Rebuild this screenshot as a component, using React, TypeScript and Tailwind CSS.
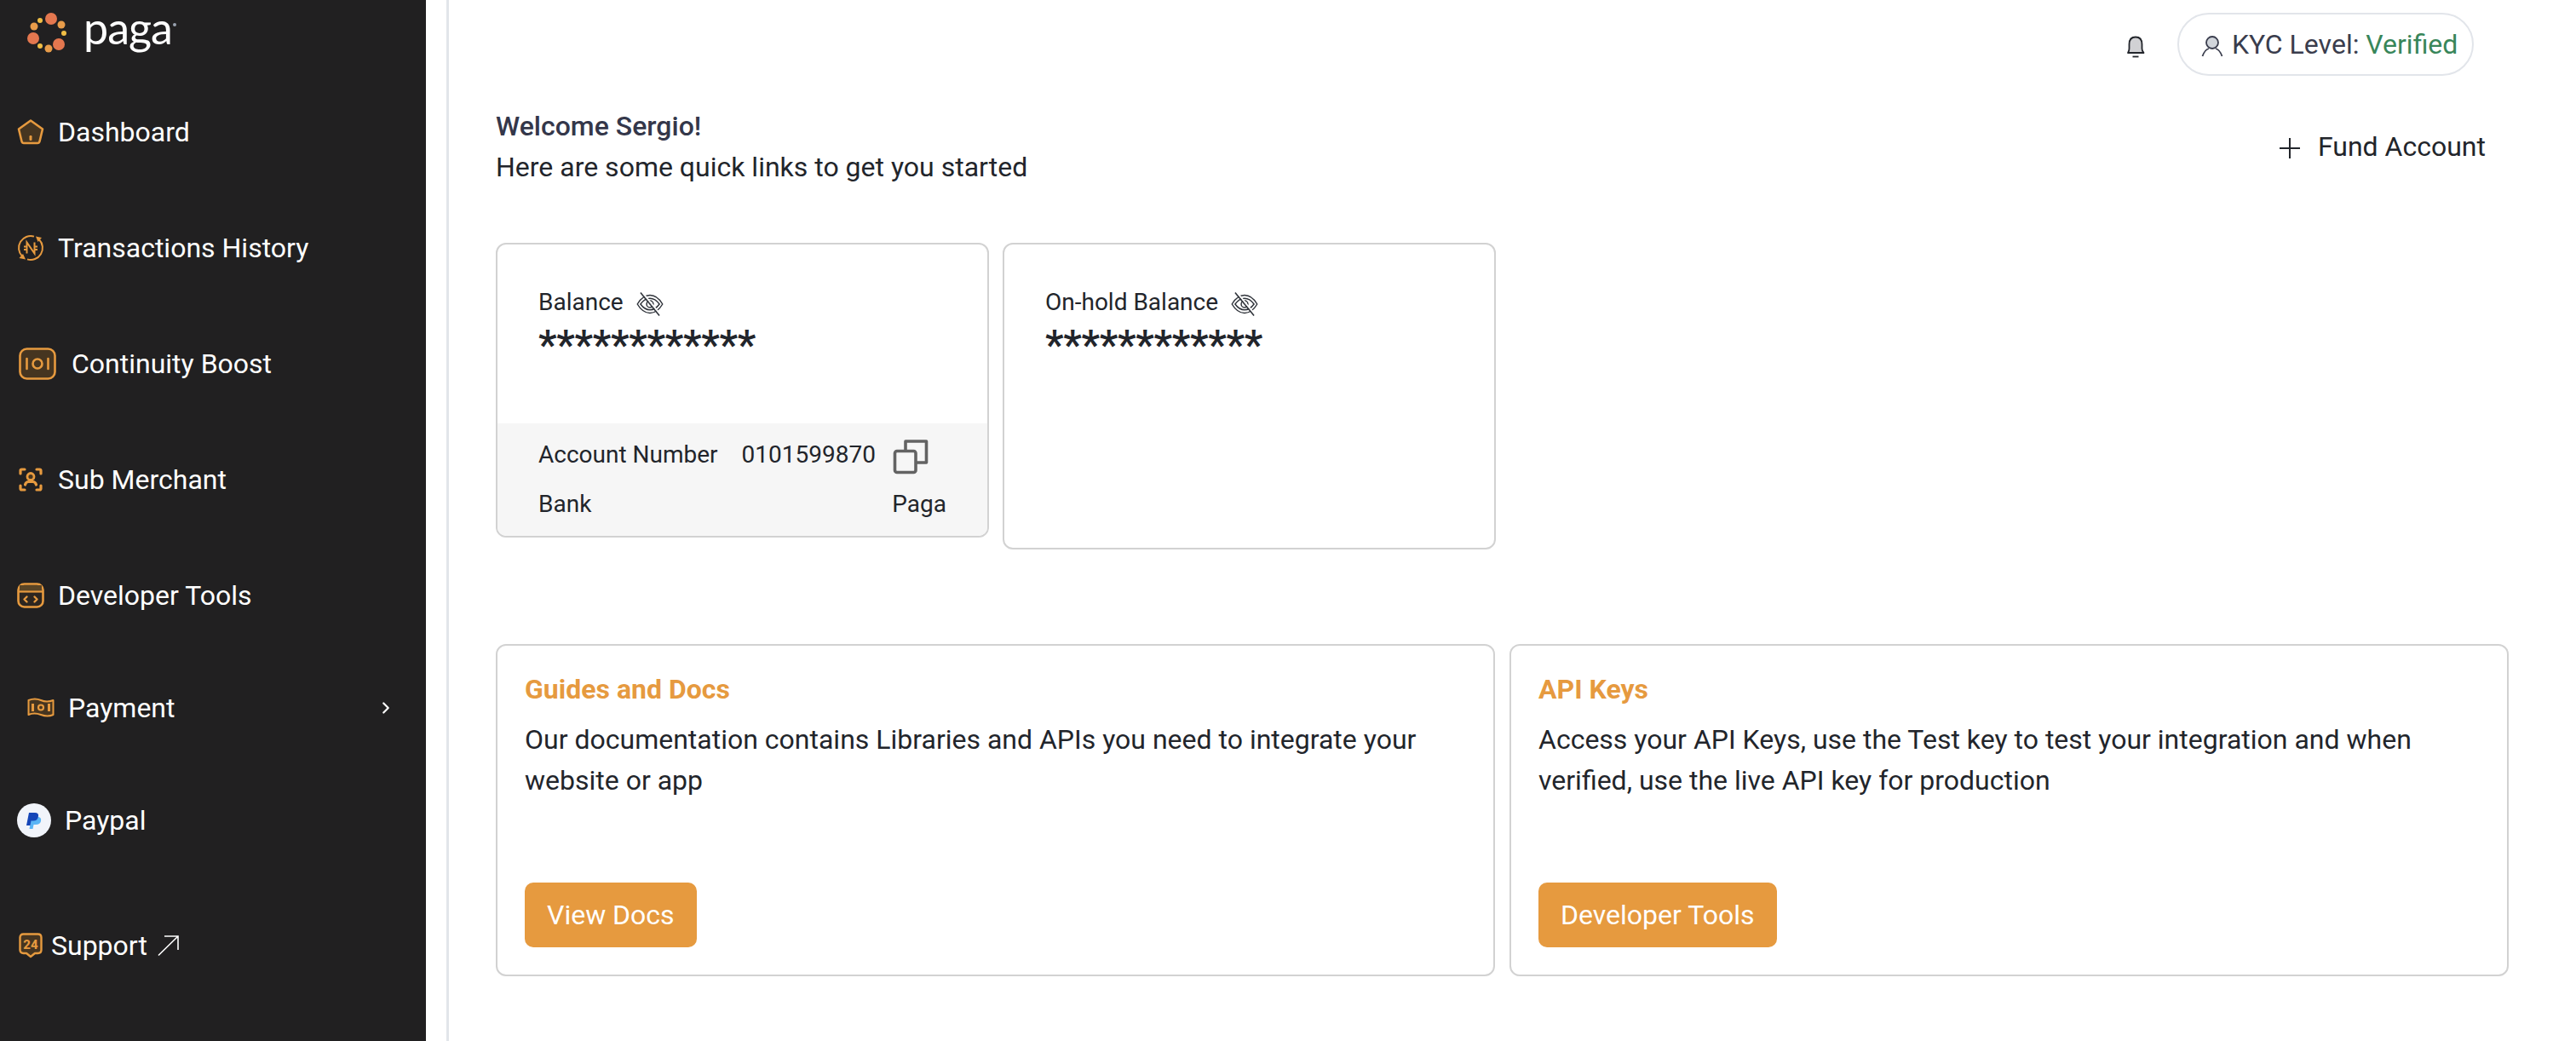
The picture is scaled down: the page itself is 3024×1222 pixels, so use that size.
import { ChevronRight } from 'lucide-react';

const iconColor = '#E69A3F';

function PagaLogo() {
  const dots: [number, number, number, string][] = [
    [60, 22, 7, '#E4774F'],
    [72, 29, 4.5, '#E89C4A'],
    [75, 39, 3, '#F0BE45'],
    [69, 52, 7, '#E4774F'],
    [57, 57, 4.5, '#E89C4A'],
    [47, 54, 3, '#F0BE45'],
    [39, 45, 7, '#E4774F'],
    [40, 31, 4.5, '#E89C4A'],
    [47, 24, 3, '#F0BE45'],
  ];
  return (
    <div className="flex items-center h-[66px]">
      <svg width="84" height="66" viewBox="0 0 84 66" className="shrink-0">
        {dots.map(([cx, cy, r, fill], i) => (
          <circle key={i} cx={cx} cy={cy} r={r} fill={fill} />
        ))}
      </svg>
      <span className="ml-[14px] -mt-[2px] text-[52px] leading-none text-white font-['Lato',sans-serif] font-normal tracking-[-1px]">paga</span>
      <span className="self-start mt-[27px] ml-[1px] w-[4px] h-[4px] rounded-full bg-gray-400"></span>
    </div>
  );
}

function HomeIcon() {
  return (
    <svg width="32" height="32" viewBox="0 0 32 32" fill="none">
      <path d="M16 2.5 L30 12.5 L26.5 27 Q26 29 24 29 H8 Q6 29 5.5 27 L2 12.5 Z" fill="#463520" stroke={iconColor} strokeWidth="2.6" strokeLinejoin="round" />
      <rect x="14.5" y="20" width="3" height="6" rx="1.2" fill={iconColor} />
    </svg>
  );
}

function NairaCycleIcon() {
  return (
    <svg width="32" height="32" viewBox="0 0 32 32" fill="none" stroke={iconColor} strokeWidth="2">
      <path d="M20 2.6 A14 14 0 0 0 6 25.8" />
      <path d="M12 29.4 A14 14 0 0 0 26 6.2" />
      <path d="M22 2.5 L29 4 L24.5 9 Z" fill={iconColor} stroke="none" />
      <path d="M10 29.5 L2.5 28 L7 23 Z" fill={iconColor} stroke="none" />
      <path d="M11.5 22.5 V9.5 L20.5 22.5 V9.5" strokeWidth="2" />
      <path d="M8 14.5 H11 M8 18 H11 M21 14.5 H24 M21 18 H24" strokeWidth="1.8" />
    </svg>
  );
}

function BoostIcon() {
  return (
    <svg width="44" height="38" viewBox="0 0 44 38" fill="none">
      <rect x="1.5" y="1.5" width="41" height="35" rx="8" fill="#463520" stroke={iconColor} strokeWidth="2.6" />
      <circle cx="22" cy="19" r="5.5" stroke={iconColor} strokeWidth="2.6" />
      <path d="M9.5 13 V25 M34.5 13 V25" stroke={iconColor} strokeWidth="2.6" strokeLinecap="round" />
    </svg>
  );
}

function ScanUserIcon() {
  return (
    <svg width="28" height="28" viewBox="0 0 28 28" fill="none" stroke={iconColor} strokeWidth="3.2" strokeLinecap="round">
      <path d="M2 7 V3.5 Q2 2 3.5 2 H7 M21 2 H24.5 Q26 2 26 3.5 V7 M26 21 V24.5 Q26 26 24.5 26 H21 M7 26 H3.5 Q2 26 2 24.5 V21" />
      <circle cx="14" cy="10.5" r="4" fill="#463520" strokeWidth="2.8" />
      <path d="M7.5 20 Q8.5 16.5 11.5 16.5 H16.5 Q19.5 16.5 20.5 20" />
    </svg>
  );
}

function DevIcon() {
  return (
    <svg width="32" height="30" viewBox="0 0 32 30" fill="none" stroke={iconColor}>
      <rect x="1.5" y="1.5" width="29" height="27" rx="7" fill="#463520" fillOpacity="0.35" strokeWidth="2.6" />
      <path d="M3 3 H29 V10 H3 Z" fill="#5a4526" stroke="none" />
      <path d="M2 10.5 H30" strokeWidth="2.2" />
      <path d="M11.5 16.5 L8.5 19.5 L11.5 22.5 M20.5 16.5 L23.5 19.5 L20.5 22.5" strokeWidth="2.4" strokeLinecap="round" strokeLinejoin="round" />
    </svg>
  );
}

function MoneyIcon() {
  return (
    <svg width="32" height="24" viewBox="0 0 32 24" fill="none" stroke={iconColor}>
      <path d="M1.5 3 Q9 0 16 3 T30.5 3 V20 Q24 23 16 20 T1.5 20 Z" fill="#463520" strokeWidth="2" strokeLinejoin="round" />
      <circle cx="16" cy="11.5" r="3" strokeWidth="2.2" />
      <path d="M6.5 7 V16 M25.5 7 V16" strokeWidth="3" />
    </svg>
  );
}

function PaypalIcon() {
  return (
    <div className="w-10 h-10 rounded-full bg-[#F1F4FA] flex items-center justify-center">
      <svg width="18" height="21" viewBox="0 0 18 21">
        <path d="M6 6 H13 Q18 6 17 11 Q16 15 11 15 H8.5 L7.5 20 H3.5 Z" fill="#5BB5F5" />
        <path d="M3 1 H10 Q14.5 1 14 5 Q13.5 10.5 8 10.5 H5.5 L4.5 16 H0 Z" fill="#1546B8" />
      </svg>
    </div>
  );
}

function SupportIcon() {
  return (
    <svg width="28" height="30" viewBox="0 0 28 30" fill="none">
      <path d="M5.5 1.5 H22.5 Q26.5 1.5 26.5 5.5 V20 Q26.5 24 22.5 24 H19 L14 28 L9 24 H5.5 Q1.5 24 1.5 20 V5.5 Q1.5 1.5 5.5 1.5 Z" fill="#463520" stroke={iconColor} strokeWidth="2.4" strokeLinejoin="round" />
      <text x="14" y="18.5" textAnchor="middle" fontSize="15" fontWeight="800" fill={iconColor} fontFamily="'Roboto',sans-serif">24</text>
    </svg>
  );
}

function EyeOff() {
  return (
    <svg width="32" height="30" viewBox="0 0 26 24" fill="none" stroke="#30343B" strokeWidth="1.2" className="shrink-0 mt-[4px]">
      <path d="M1 12 Q6 3.5 13 3.5 Q20 3.5 25 12 Q20 20.5 13 20.5 Q6 20.5 1 12 Z" />
      <path d="M4 12 Q8 6.5 13 6.5 Q18 6.5 22 12 Q18 17.5 13 17.5 Q8 17.5 4 12 Z" />
      <circle cx="13" cy="12" r="3.2" />
      <path d="M5 0 L23 22" strokeWidth="1.6" stroke="#fff" />
      <path d="M4 1 L22 23" strokeWidth="1.3" />
    </svg>
  );
}

function CopyIcon() {
  return (
    <svg width="42" height="42" viewBox="0 0 42 42" fill="none" stroke="#636363" strokeWidth="3.6" strokeLinejoin="round">
      <path d="M15 14 V3 H39.5 V28 H27" />
      <rect x="2.5" y="14.5" width="24.5" height="25" rx="2.5" />
    </svg>
  );
}

type NavItem = {
  label: string;
  icon: React.ReactNode;
  box: string;
  row: string;
  gap: string;
  chevron?: boolean;
  arrow?: boolean;
};

const navItems: NavItem[] = [
  { label: 'Dashboard', icon: <HomeIcon />, box: 'pl-[20px]', row: 'h-[136px]', gap: 'gap-[16px]' },
  { label: 'Transactions History', icon: <NairaCycleIcon />, box: 'pl-[20px]', row: 'h-[136px]', gap: 'gap-[16px]' },
  { label: 'Continuity Boost', icon: <BoostIcon />, box: 'pl-[22px]', row: 'h-[136px]', gap: 'gap-[18px]' },
  { label: 'Sub Merchant', icon: <ScanUserIcon />, box: 'pl-[22px]', row: 'h-[136px]', gap: 'gap-[18px]' },
  { label: 'Developer Tools', icon: <DevIcon />, box: 'pl-[20px]', row: 'h-[136px]', gap: 'gap-[16px]' },
  { label: 'Payment', icon: <MoneyIcon />, box: 'pl-[32px]', row: 'h-[128px]', gap: 'gap-[16px]', chevron: true },
  { label: 'Paypal', icon: <PaypalIcon />, box: 'pl-[20px]', row: 'h-[136px]', gap: 'gap-[16px]' },
  { label: 'Support', icon: <SupportIcon />, box: 'pl-[22px]', row: 'h-[157px]', gap: 'gap-[10px]', arrow: true },
];

function Sidebar() {
  return (
    <aside className="w-[500px] shrink-0 h-[1222px] bg-[#212021] overflow-hidden">
      <div className="h-[87px]">
        <PagaLogo />
      </div>
      {navItems.map((item) => (
        <div key={item.label} className={`flex items-center pr-[36px] ${item.row} ${item.box} ${item.gap}`}>
          {item.icon}
          <span className="text-[32px] leading-none text-white">{item.label}</span>
          {item.arrow && (
            <svg width="26" height="26" viewBox="0 0 26 26" fill="none" stroke="#fff" strokeWidth="1.6" className="ml-[2px]">
              <path d="M1 24.5 L24 2 M8 2 H24 V18" />
            </svg>
          )}
          {item.chevron && <ChevronRight className="ml-auto" size={22} color="#fff" strokeWidth={2.4} />}
        </div>
      ))}
    </aside>
  );
}

function BalanceCard({ label, footer, className }: { label: string; footer?: boolean; className: string }) {
  return (
    <div className={`w-[579px] rounded-[12px] border-2 border-[#D2D2D2] overflow-hidden flex flex-col ${className}`}>
      <div className="pl-[48px] pt-[52px] flex-1">
        <div className="flex items-center gap-[15px] h-[32px]">
          <span className="text-[28px] text-[#22252B]">{label}</span>
          <EyeOff />
        </div>
        <div className="text-[48px] leading-none font-semibold text-[#22252B] mt-[10px] tracking-[-0.3px]">************</div>
      </div>
      {footer && (
        <div className="h-[132px] bg-[#F6F6F6] pl-[48px] pr-[48px] text-[28px] text-[#22252B] pt-[16px]">
          <div className="flex items-center h-[42px]">
            <span>Account Number</span>
            <span className="ml-[28px]">0101599870</span>
            <span className="ml-[20px] mt-[4px]"><CopyIcon /></span>
          </div>
          <div className="flex justify-between mt-[16px]">
            <span>Bank</span>
            <span>Paga</span>
          </div>
        </div>
      )}
    </div>
  );
}

function LinkCard({ title, body, action }: { title: string; body: string; action: string }) {
  return (
    <div className="flex-1 h-[390px] rounded-[12px] border-2 border-[#D2D2D2] pl-[32px] pr-[32px] pt-[32px] flex flex-col">
      <h3 className="text-[32px] leading-[40px] font-bold text-[#E69A3F] -mt-[1px]">{title}</h3>
      <p className="text-[32px] leading-[48px] text-[#22252B] mt-[15px]">{body}</p>
      <div className="mt-auto mb-[32px]">
        <button className="h-[76px] px-[26px] rounded-[10px] bg-[#E69A3F] text-[32px] text-white">{action}</button>
      </div>
    </div>
  );
}

export default function App() {
  return (
    <div className="flex w-[3024px] h-[1222px] overflow-hidden bg-white font-['Roboto',sans-serif]">
      <Sidebar />
      <main className="flex-1 ml-[24px] border-l-[3px] border-[#E2E5EA] pl-[55px] pr-[79px]">
        <div className="flex items-center justify-end h-[104px]">
          <svg width="24" height="28" viewBox="0 0 24 28" fill="#D1D1D4" stroke="#22252B" strokeWidth="1.8" strokeLinejoin="round" className="mr-[37px] mt-[6px]">
            <path d="M3 21 Q4.5 19 4.5 16 V11 Q4.5 2.5 12 2.5 Q19.5 2.5 19.5 11 V16 Q19.5 19 21.5 21 Z" />
            <path d="M8.5 25.5 H15.5" fill="none" />
          </svg>
          <div className="h-[74px] w-[348px] rounded-full border-2 border-[#E2E5EA] flex items-center pl-[26px] mr-[41px] text-[32px]">
            <svg width="26" height="26" viewBox="0 0 26 26" fill="#D1D5DB" stroke="#3A3D4D" strokeWidth="1.8" className="mr-[10px] mt-[4px]">
              <circle cx="13" cy="9" r="7" />
              <path d="M1.5 25 Q4 17.5 9 16 M24.5 25 Q22 17.5 17 16" fill="none" />
            </svg>
            <span className="text-[#3A3D4D]">KYC Level: <span className="text-[#38865A]">Verified</span></span>
          </div>
        </div>

        <div className="flex justify-between pt-[20px]">
          <div className="text-[32px] leading-[48px]">
            <div className="font-medium text-[#34374A]">Welcome Sergio!</div>
            <div className="text-[#22252B]">Here are some quick links to get you started</div>
          </div>
          <div className="flex items-center h-[50px] mt-[23px] gap-[21px] mr-[27px] text-[32px] text-[#22252B]">
            <svg width="24" height="24" viewBox="0 0 24 24" stroke="#22252B" strokeWidth="2" className="mt-[4px]">
              <path d="M12 0 V24 M0 12 H24" />
            </svg>
            <span>Fund Account</span>
          </div>
        </div>

        <div className="flex items-start gap-[16px] mt-[65px]">
          <BalanceCard label="Balance" footer className="h-[346px]" />
          <BalanceCard label="On-hold Balance" className="h-[360px]" />
        </div>

        <div className="flex gap-[17px] mt-[111px]">
          <LinkCard
            title="Guides and Docs"
            body="Our documentation contains Libraries and APIs you need to integrate your website or app"
            action="View Docs"
          />
          <LinkCard
            title="API Keys"
            body="Access your API Keys, use the Test key to test your integration and when verified, use the live API key for production"
            action="Developer Tools"
          />
        </div>
      </main>
    </div>
  );
}
